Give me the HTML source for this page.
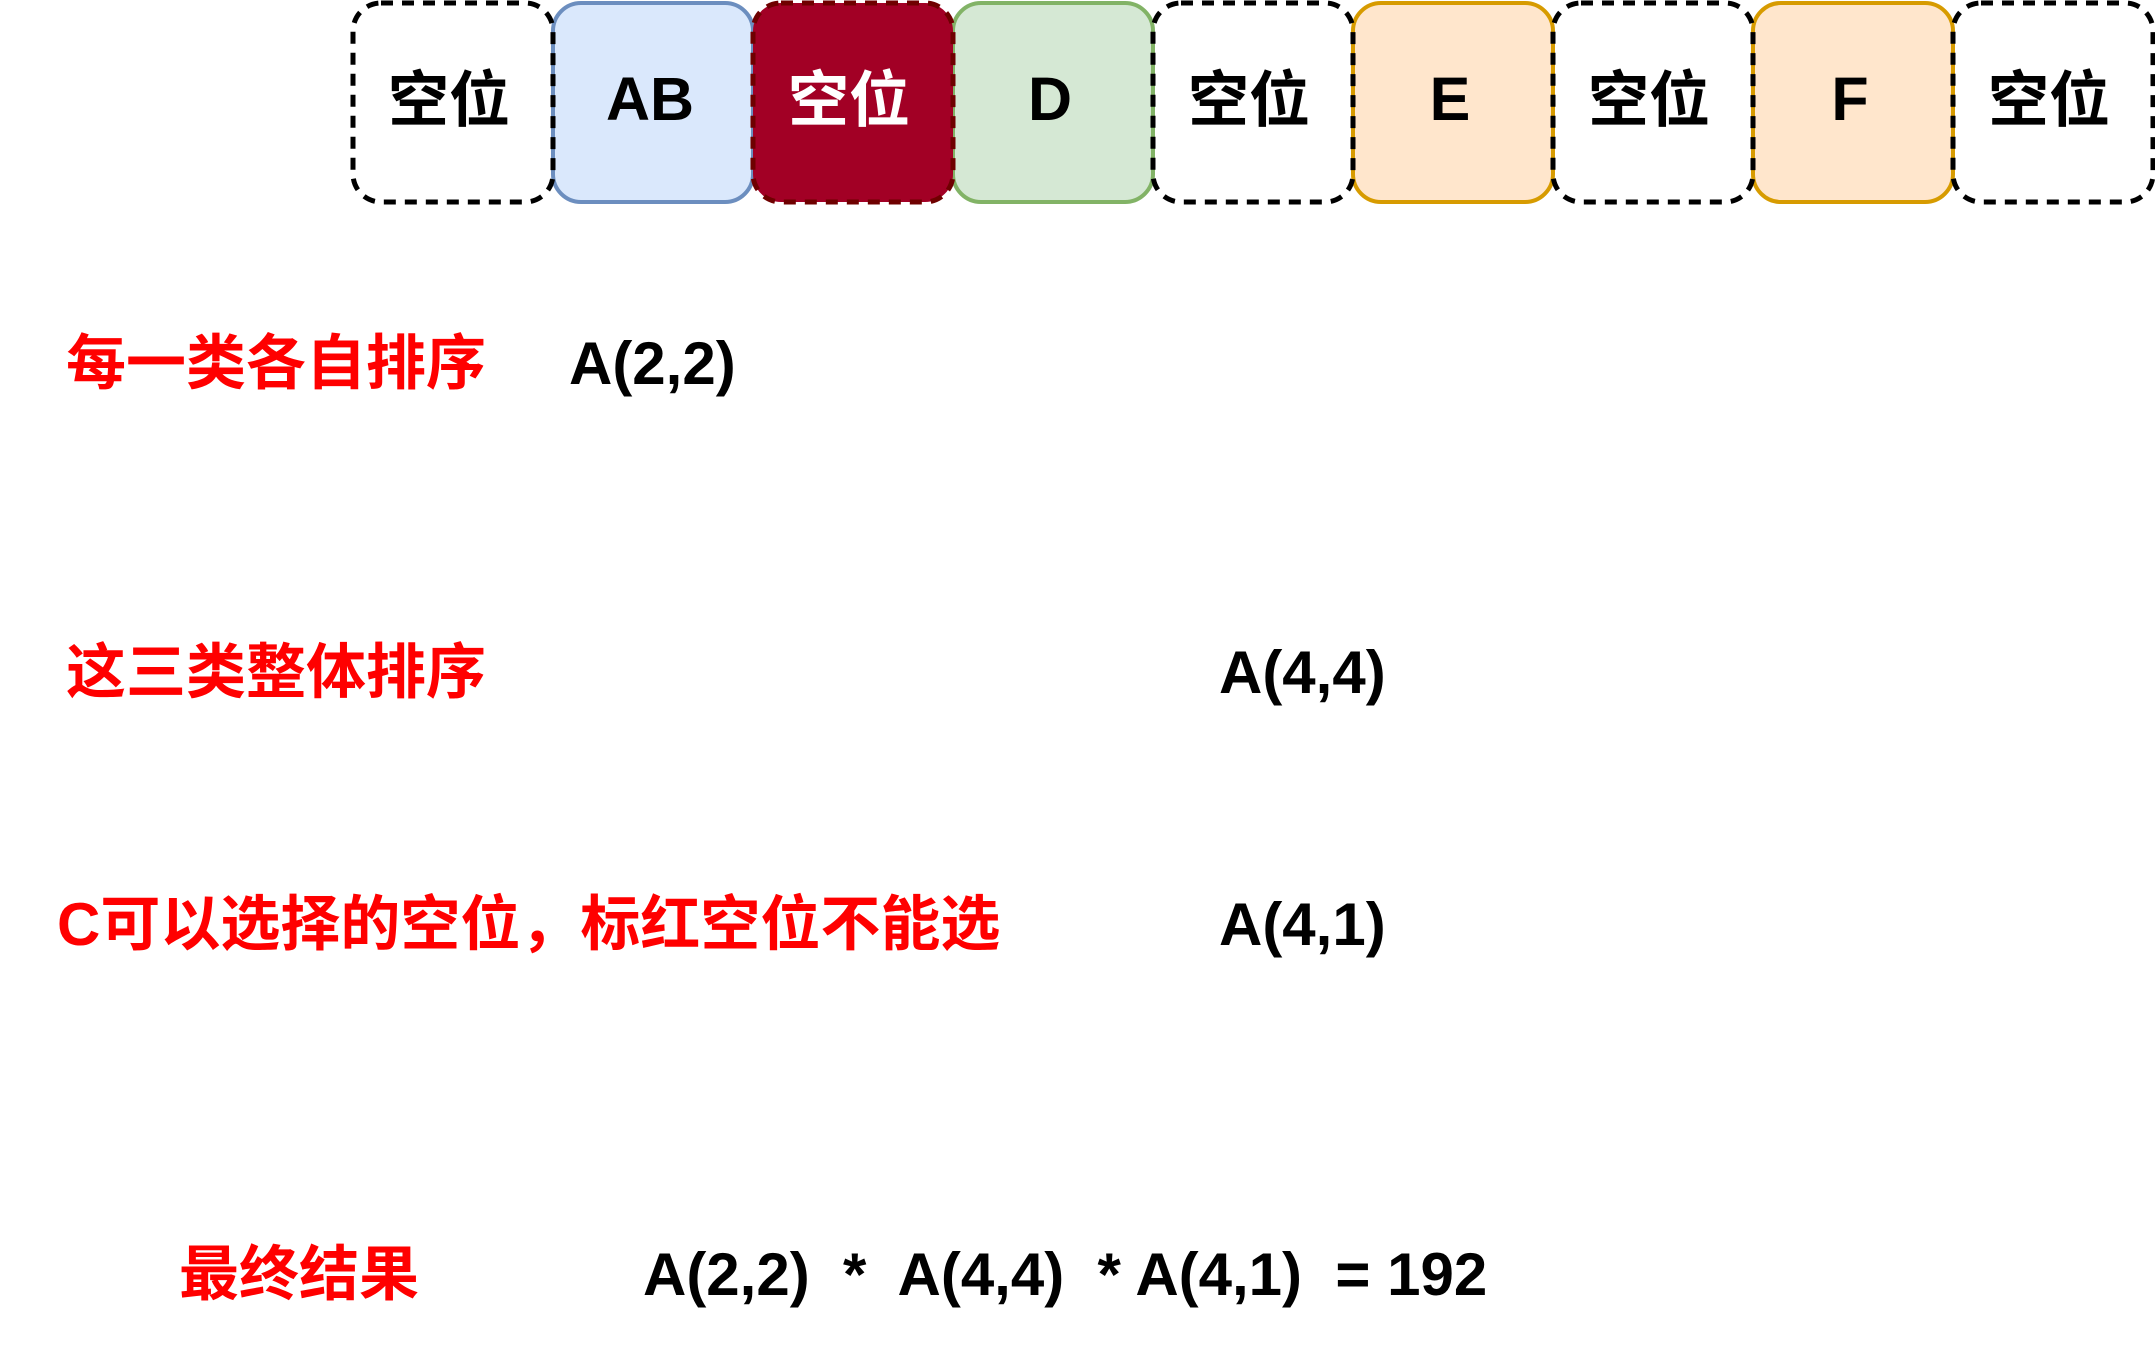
<!DOCTYPE html>
<html><head><meta charset="utf-8"><style>
html,body{margin:0;padding:0;background:#fff;width:2155px;height:1355px;overflow:hidden;position:relative}
.t{position:absolute;font-family:"Liberation Sans","Noto Sans CJK SC",sans-serif;font-weight:bold;font-size:60px;line-height:60px;white-space:pre}
.r{color:#ff0000}
.k{color:#000}
</style></head><body>
<svg width="2155" height="210" style="position:absolute;left:0;top:0" font-family="Liberation Sans, Noto Sans CJK SC, sans-serif" font-weight="bold" font-size="61">
<rect x="553" y="3" width="200" height="199" rx="28" fill="#dae8fc" stroke="#6c8ebf" stroke-width="4"/>
<rect x="953" y="3" width="200" height="199" rx="28" fill="#d5e8d4" stroke="#82b366" stroke-width="4"/>
<rect x="1353" y="3" width="200" height="199" rx="28" fill="#ffe6cc" stroke="#d79b00" stroke-width="4"/>
<rect x="1753" y="3" width="200" height="199" rx="28" fill="#ffe6cc" stroke="#d79b00" stroke-width="4"/>
<rect x="753" y="3" width="200" height="199" rx="28" fill="#a20025" stroke="#6f0000" stroke-width="5" stroke-dasharray="12 9"/>
<g fill="none" stroke="#000" stroke-width="5" stroke-dasharray="12 9">
<rect x="353" y="3" width="200" height="199" rx="28"/>
<rect x="1153" y="3" width="200" height="199" rx="28"/>
<rect x="1553" y="3" width="200" height="199" rx="28"/>
<rect x="1953" y="3" width="200" height="199" rx="28"/>
</g>
<g text-anchor="middle" fill="#000">
<text x="449" y="121">空位</text>
<text x="650" y="120">AB</text>
<text x="849" y="121" fill="#fff">空位</text>
<text x="1050" y="120">D</text>
<text x="1249" y="121">空位</text>
<text x="1450" y="120">E</text>
<text x="1649" y="121">空位</text>
<text x="1850" y="120">F</text>
<text x="2049" y="121">空位</text>
</g>
</svg>
<div class="t r" style="left:66px;top:334px">每一类各自排序</div>
<div class="t k" style="left:569px;top:334px">A(2,2)</div>
<div class="t r" style="left:66px;top:643px">这三类整体排序</div>
<div class="t k" style="left:1219px;top:643px">A(4,4)</div>
<div class="t r" style="left:57px;top:895px">C可以选择的空位，标红空位不能选</div>
<div class="t k" style="left:1219px;top:895px">A(4,1)</div>
<div class="t r" style="left:179px;top:1245px">最终结果</div>
<div class="t k" style="left:643px;top:1245px">A(2,2)  *  A(4,4)  * A(4,1)  = 192</div>
</body></html>
